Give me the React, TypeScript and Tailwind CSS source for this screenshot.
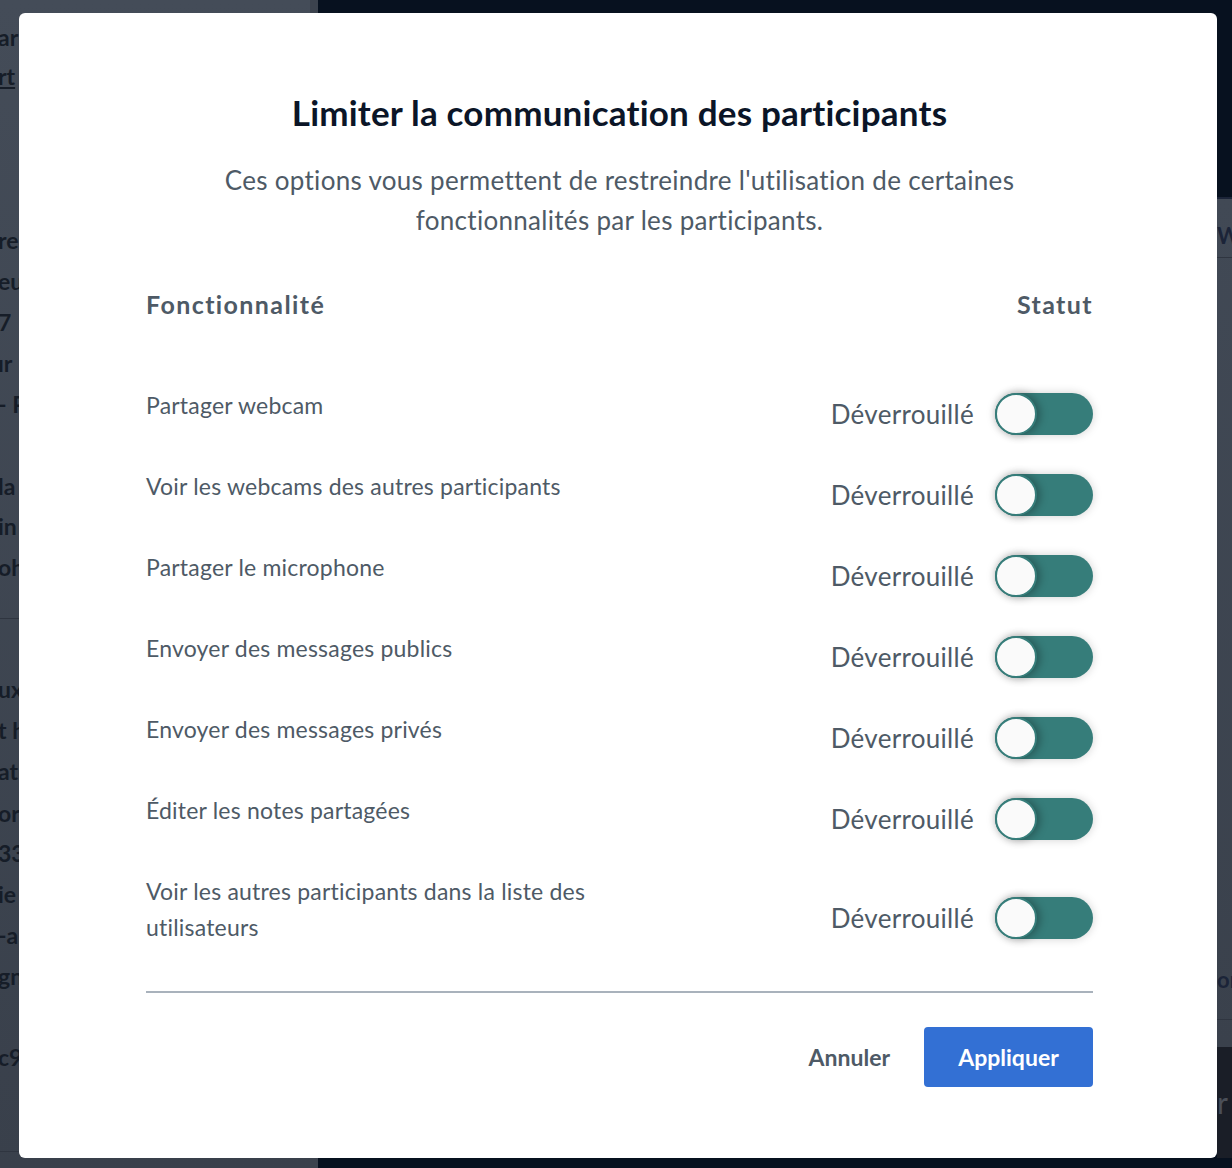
import React from "react";

const rows = [
  "Partager webcam",
  "Voir les webcams des autres participants",
  "Partager le microphone",
  "Envoyer des messages publics",
  "Envoyer des messages privés",
  "Éditer les notes partagées",
  "Voir les autres participants dans la liste des utilisateurs",
];

const leftFrags: [number, string, boolean?][] = [
  [38, "ar"],
  [77, "rt", true],
  [241, "re"],
  [282, "eu"],
  [323, "7"],
  [364, "ır"],
  [405, "- P"],
  [487, "la"],
  [527, "in"],
  [568, "oh"],
  [690, "ux"],
  [731, "t h"],
  [772, "at"],
  [814, "or"],
  [854, "33"],
  [895, "ie"],
  [936, "-a"],
  [977, "gn"],
  [1058, "c9"],
];

function Toggle() {
  return (
    <div className="relative h-[42px] w-[98px] rounded-full bg-[#367d7a] shadow-[0_0_10px_rgba(0,0,0,0.18)]">
      <div className="absolute left-0 top-0 h-[42px] w-[42px] rounded-full border-2 border-[#367d7a] bg-[#fafafa] shadow-[3px_0_8px_rgba(0,0,0,0.3)]" />
    </div>
  );
}

export default function App() {
  return (
    <div
      className="relative h-[1168px] w-full overflow-hidden bg-[#07111f]"
      style={{ fontFamily: "Lato, 'Noto Sans', sans-serif" }}
    >
      {/* background page */}
      <div className="flex h-full">
        <div className="relative h-full w-[318px] bg-gradient-to-b from-[#444c58] to-[#39404b] border-r-[8px] border-[#3c434e]">
          {leftFrags.map(([y, t, u], i) => (
            <div
              key={i}
              className={`absolute left-[-2px] text-[23px] font-bold leading-none text-[#161d28] ${u ? "underline" : ""}`}
              style={{ top: y - 12 }}
            >
              {t}
            </div>
          ))}
          <div className="absolute left-0 right-0 top-[618px] h-px bg-[#2f3540]" />
          <div className="absolute left-0 right-0 top-[1151px] h-px bg-[#2f3540]" />
        </div>
        <div className="flex-1" />
        <div className="relative h-full w-[15px]">
          <div className="absolute left-0 right-0 top-[197px] h-[850px] bg-gradient-to-b from-[#414955] to-[#3a414c]">
            <div className="h-[2px] bg-[#1b2438]" />
            <div className="mt-[26px] text-[22px] font-bold leading-none text-[#1b2438]">W</div>
            <div className="mt-[10px] h-px bg-[#2f3540]" />
            <div className="absolute top-[772px] left-0 text-[22px] font-bold leading-none text-[#1b2438]">or</div>
            <div className="absolute top-[822px] left-0 right-0 h-px bg-[#2f3540]" />
          </div>
          <div className="absolute left-0 right-0 top-[1047px] h-[111px] bg-[#1a1e27]">
            <div className="mt-[40px] text-[30px] leading-none text-[#4a4f58]">r</div>
          </div>
        </div>
      </div>

      {/* modal */}
      <div className="absolute left-[19px] top-[13px] h-[1145px] w-[1198px] rounded-[6px] bg-white">
        <div className="pl-[127px] pr-[124px] pt-[79px]">
          <h2 className="text-center text-[35px] font-bold leading-[40px] tracking-[0.2px] text-[#0b1527]">
            Limiter la communication des participants
          </h2>
          <p className="mx-auto mt-[28px] w-[850px] text-center text-[26px] leading-[40px] tracking-[0.3px] text-[#4e5a66]">
            Ces options vous permettent de restreindre l'utilisation de certaines fonctionnalités par les participants.
          </p>
          <div className="mt-[46px] flex items-center justify-between text-[25px] font-bold leading-[36px] tracking-[1.4px] text-[#4e5a66]">
            <span>Fonctionnalité</span>
            <span>Statut</span>
          </div>
          <div className="mt-[51px]">
            {rows.map((r) => (
              <div key={r} className="flex items-center justify-between">
                <div className="max-w-[480px] self-start pt-[14px] pb-[31px] text-[23px] leading-[36px] tracking-[0.2px] text-[#4e5a66]">
                  {r}
                </div>
                <div className="flex items-center gap-[21px]">
                  <span className="text-[26px] leading-[36px] tracking-[0.3px] text-[#4e5a66]">Déverrouillé</span>
                  <Toggle />
                </div>
              </div>
            ))}
          </div>
          <div className="mt-[15px] h-[2px] bg-[#a9b2bc]" />
          <div className="mt-[34px] flex items-center justify-end gap-[14px]">
            <button className="h-[60px] px-[20px] text-[23px] font-bold text-[#4e5a66]">Annuler</button>
            <button className="h-[60px] w-[169px] rounded-[4px] bg-[#3370d4] text-[23px] font-bold text-white">
              Appliquer
            </button>
          </div>
        </div>
      </div>
    </div>
  );
}
